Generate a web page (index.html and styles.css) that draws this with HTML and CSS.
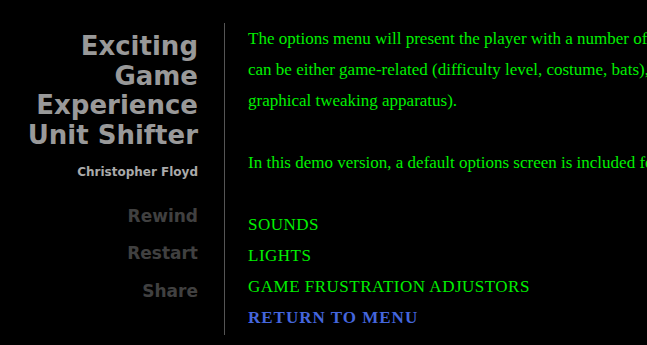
FILE: index.html
```html
<!DOCTYPE html>
<html lang="en">
<head>
  <meta charset="UTF-8" />
  <title>Exciting Game Experience Unit Shifter</title>
  <link rel="stylesheet" href="styles.css">
</head>
<body>

  <div class="page">

    <!-- left column: title + nav -->
    <div class="sidebar">
      <h1 class="title">Exciting<br>Game<br>Experience<br>Unit Shifter</h1>
      <div class="author">Christopher Floyd</div>

      <ul class="nav">
        <li>Rewind</li>
        <li>Restart</li>
        <li>Share</li>
      </ul>
    </div>

    <!-- main options text -->
    <div class="content">
      <p>The options menu will present the player with a number of options. These options<br>
      can be either game-related (difficulty level, costume, bats), or technical (an elaborate<br>
      graphical tweaking apparatus).</p>

      <p>In this demo version, a default options screen is included for demonstration purposes.</p>

      <ul class="options">
        <li>SOUNDS</li>
        <li>LIGHTS</li>
        <li>GAME FRUSTRATION ADJUSTORS</li>
        <li class="back">RETURN TO MENU</li>
      </ul>
    </div>

  </div>

</body>
</html>
```

FILE: styles.css
```css
body {
  margin: 0;
  background: #000;
  overflow: hidden;
}

.page {
  display: flex;
  align-items: stretch;
  padding-top: 23px;
}

.sidebar {
  flex: 0 0 198px;
  padding-right: 26px;
  border-right: 1px solid #555;
  text-align: right;
  font-family: "DejaVu Sans", Verdana, sans-serif;
  font-weight: bold;
}

.title {
  margin: 9px 0 0;
  font-size: 26px;
  line-height: 29.7px;
  color: #999;
}

.author {
  margin-top: 14px;
  font-size: 12px;
  color: #aaa;
}

.nav {
  list-style: none;
  margin: 19px 0 0;
  padding: 0;
}

.nav li {
  font-size: 17px;
  line-height: 37.5px;
  color: #404040;
}

.content {
  flex: 1;
  min-width: 0;
  overflow: hidden;
  padding-left: 23px;
  padding-bottom: 2px;
  font-family: "Liberation Serif", "Times New Roman", serif;
  font-size: 17px;
  line-height: 31px;
  color: #00f000;
  white-space: nowrap;
}

.content p {
  margin: 0 0 31px;
}

.options {
  list-style: none;
  margin: 31px 0 0;
  padding: 0;
  letter-spacing: 0.5px;
}

.options .back {
  color: #4466dd;
  font-weight: bold;
  letter-spacing: 1px;
}
```
